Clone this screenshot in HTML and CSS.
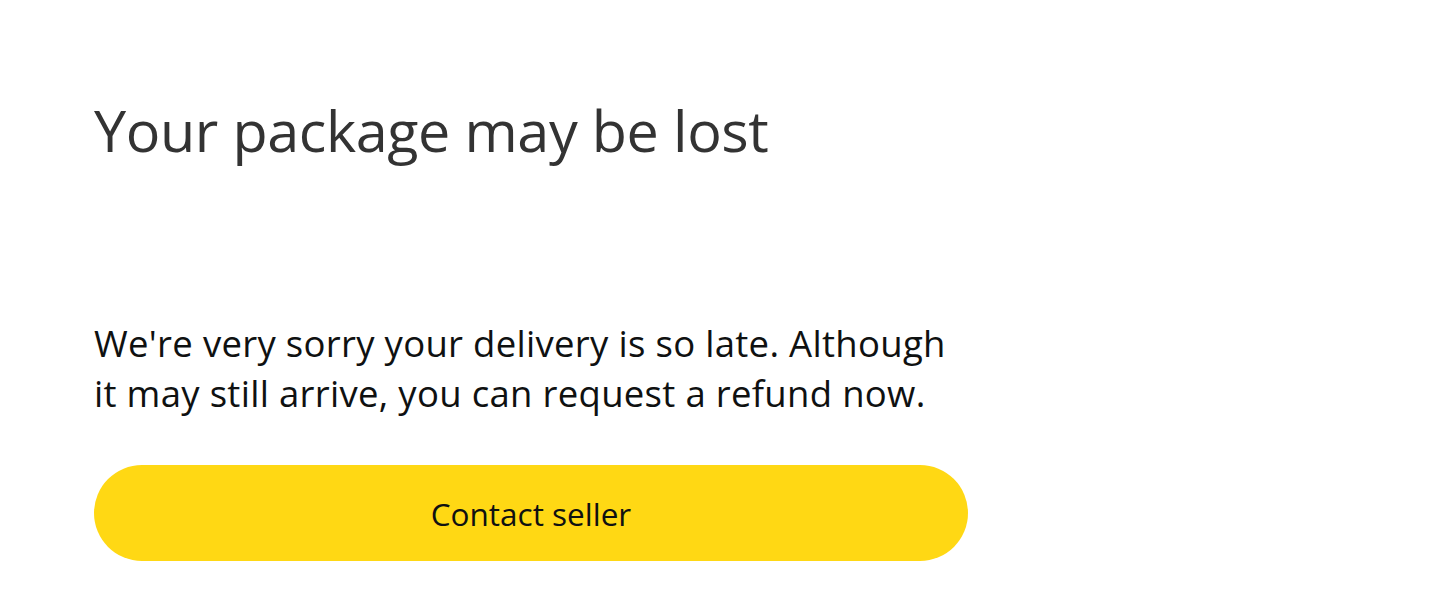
FILE: index.html
```html
<!DOCTYPE html>
<html lang="en">
<head>
<meta charset="utf-8">
<title>Your package may be lost</title>
<link rel="stylesheet" href="styles.css">
</head>
<body>
<main class="panel">
  <h1 class="title">Your package may be lost</h1>
  <p class="message">We're very sorry your delivery is so late. Although it may still arrive, you can request a refund now.</p>
  <button class="btn-primary" type="button">Contact seller</button>
</main>
</body>
</html>
```
FILE: styles.css
```css
html, body {
  margin: 0;
  padding: 0;
  background: #ffffff;
}
body {
  font-family: "Open Sans", "Noto Sans", Arial, sans-serif;
  color: #0f1111;
}
.panel {
  display: flex;
  flex-direction: column;
  align-items: flex-start;
  padding: 92px 0 0 94px;
  width: 874px;
}
.title {
  margin: 0;
  font-size: 57.5px;
  font-weight: 400;
  line-height: 76px;
  color: #333333;
  letter-spacing: -0.4px;
}
.message {
  margin: 150px 0 0 0;
  font-size: 36.5px;
  line-height: 50px;
  color: #0f1111;
  width: 862px;
  letter-spacing: 0.3px;
}
.btn-primary {
  margin-top: 47px;
  width: 874px;
  height: 96px;
  border: none;
  border-radius: 48px;
  background: #ffd814;
  color: #0f1111;
  font-family: inherit;
  font-size: 31.5px;
  cursor: pointer;
}
```
